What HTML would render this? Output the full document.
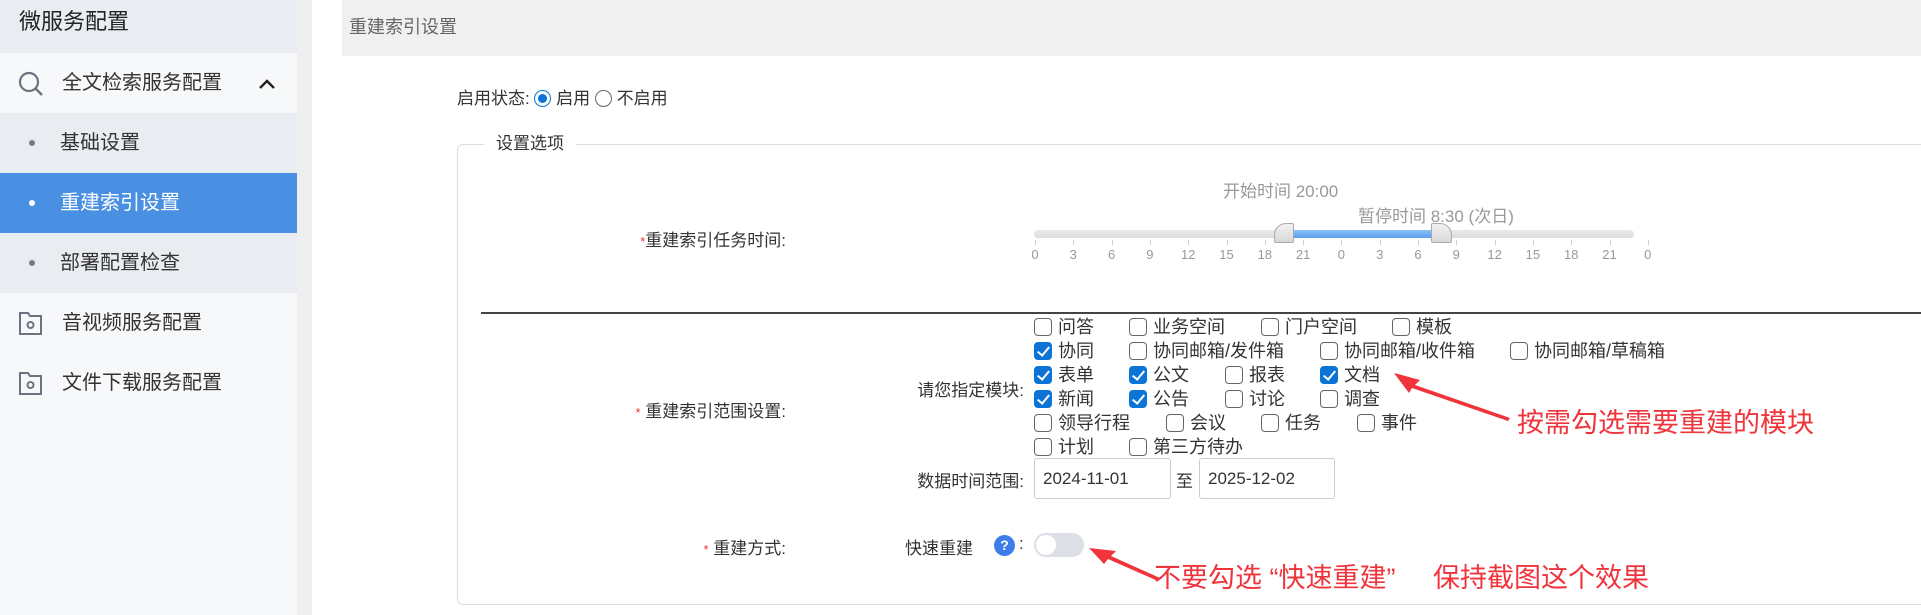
<!DOCTYPE html>
<html><head><meta charset="utf-8"><style>
*{margin:0;padding:0;box-sizing:border-box}
body{width:1921px;height:615px;overflow:hidden;background:#fff;font-family:"Liberation Sans","Noto Sans CJK SC",sans-serif;color:#333;position:relative}
.a{position:absolute;white-space:nowrap}
#side{position:absolute;left:0;top:0;width:297px;height:615px;background:#f7f8fa}
.si{position:absolute;left:0;width:297px;height:60px;font-size:20px;line-height:60px;color:#333}
.dot{position:absolute;left:29px;top:27px;width:6px;height:6px;border-radius:3px;background:#777b85}
.cb{position:absolute;width:18px;height:18px;border:1.5px solid #666;border-radius:4px;background:#fff}
.cb.on{background:#0b74d6;border-color:#0b74d6}
.cb.on:after{content:"";position:absolute;left:5px;top:1px;width:5px;height:10px;border:solid #fff;border-width:0 2.5px 2.5px 0;transform:rotate(40deg)}
.cl{position:absolute;font-size:18px;line-height:24px;color:#333}
.tk{position:absolute;top:247px;font-size:13px;color:#999;width:30px;margin-left:-15px;text-align:center}
.tm{position:absolute;top:240px;width:1px;height:5px;background:#ccc}
.lbl{position:absolute;font-size:17px;color:#333;text-align:right;white-space:nowrap}
.red{color:#f0343c}
</style></head><body>
<div id="side">
 <div class="si" style="top:0;height:53px;line-height:44px;background:#e9ecf1;font-size:22px;padding-left:19px;color:#222">微服务配置</div>
 <div class="si" style="top:53px;background:#f7f8fa">
  <svg class="a" style="left:18px;top:18px" width="26" height="26" viewBox="0 0 26 26"><circle cx="11" cy="11" r="9" fill="none" stroke="#6c7280" stroke-width="2.2"/><line x1="17.5" y1="17.5" x2="24" y2="24" stroke="#6c7280" stroke-width="2.4"/></svg>
  <span class="a" style="left:62px">全文检索服务配置</span>
  <svg class="a" style="left:258px;top:25px" width="18" height="12" viewBox="0 0 18 12"><polyline points="2,10 9,3 16,10" fill="none" stroke="#222" stroke-width="2.4"/></svg>
 </div>
 <div class="si" style="top:113px;background:#e9ecf1"><div class="dot"></div><span class="a" style="left:60px">基础设置</span></div>
 <div class="si" style="top:173px;background:#4a90e2;color:#fff"><div class="dot" style="background:#fff"></div><span class="a" style="left:60px">重建索引设置</span></div>
 <div class="si" style="top:233px;background:#e9ecf1"><div class="dot"></div><span class="a" style="left:60px">部署配置检查</span></div>
 <div class="si" style="top:293px">
  <svg class="a" style="left:18px;top:18px" width="25" height="25" viewBox="0 0 25 25"><path d="M2 2h8l2 3h11v18H2z" fill="none" stroke="#6c7280" stroke-width="2"/><circle cx="12.5" cy="14" r="3" fill="none" stroke="#6c7280" stroke-width="2"/></svg>
  <span class="a" style="left:62px">音视频服务配置</span></div>
 <div class="si" style="top:353px">
  <svg class="a" style="left:18px;top:18px" width="25" height="25" viewBox="0 0 25 25"><path d="M2 2h8l2 3h11v18H2z" fill="none" stroke="#6c7280" stroke-width="2"/><circle cx="12.5" cy="14" r="3" fill="none" stroke="#6c7280" stroke-width="2"/></svg>
  <span class="a" style="left:62px">文件下载服务配置</span></div>
</div>
<div class="a" style="left:297px;top:0;width:15px;height:615px;background:#efefef"></div>
<div class="a" style="left:342px;top:0;width:1579px;height:56px;background:#f0f0f0"></div>
<div class="a" style="left:349px;top:13px;font-size:18px;color:#666">重建索引设置</div>

<div class="a" style="left:457px;top:88px;font-size:17px;line-height:22px">启用状态: <span style="display:inline-block;width:17px;height:17px;border-radius:50%;border:1.5px solid #0b74d6;vertical-align:-3px;position:relative"><span style="position:absolute;left:2.5px;top:2.5px;width:9px;height:9px;border-radius:50%;background:#0b74d6"></span></span> 启用 <span style="display:inline-block;width:17px;height:17px;border-radius:50%;border:1.5px solid #666;vertical-align:-3px"></span> 不启用</div>

<div class="a" style="left:457px;top:144px;width:1600px;height:461px;border:1px solid #ddd;border-radius:6px"></div>
<div class="a" style="left:484px;top:133px;padding:0 12px;background:#fff;font-size:17px;line-height:22px">设置选项</div>

<div class="lbl" style="left:600px;width:186px;top:226px"><span class="red" style="font-size:13px">*</span>重建索引任务时间:</div>
<div class="a" style="left:1223px;top:177px;font-size:17px;color:#999">开始时间 20:00</div>
<div class="a" style="left:1358px;top:202px;font-size:17px;color:#999">暂停时间 8:30 (次日)</div>
<div class="a" style="left:1034px;top:230px;width:600px;height:8px;border-radius:4px;background:linear-gradient(#eaeaea,#dcdcdc)"></div>
<div class="a" style="left:1294px;top:230px;width:137px;height:8px;background:linear-gradient(#8ec0f5,#5a9ef0)"></div>
<div class="a" style="left:1274px;top:223px;width:20px;height:20px;background:linear-gradient(#f2f2f2,#d8d8d8);border:1px solid #aaa;border-radius:12px 2px 2px 2px"></div>
<div class="a" style="left:1431px;top:223px;width:21px;height:20px;background:linear-gradient(#f2f2f2,#d8d8d8);border:1px solid #aaa;border-radius:2px 12px 2px 2px"></div>
<div id="ticks"></div>

<div class="a" style="left:481px;top:312px;width:1440px;height:2px;background:#444"></div>

<div class="lbl" style="left:600px;width:186px;top:397px"><span class="red" style="font-size:13px">*</span> 重建索引范围设置:</div>
<div class="lbl" style="left:880px;width:144px;top:376px">请您指定模块:</div>
<div id="cbs"></div>
<div class="lbl" style="left:880px;width:144px;top:467px">数据时间范围:</div>
<div class="a" style="left:1034px;top:458px;width:137px;height:41px;border:1px solid #ccc;border-radius:3px;font-size:17px;line-height:39px;padding-left:8px">2024-11-01</div>
<div class="a" style="left:1176px;top:467px;font-size:17px">至</div>
<div class="a" style="left:1199px;top:458px;width:136px;height:41px;border:1px solid #ccc;border-radius:3px;font-size:17px;line-height:39px;padding-left:8px">2025-12-02</div>

<div class="lbl" style="left:600px;width:186px;top:534px"><span class="red" style="font-size:13px">*</span> 重建方式:</div>
<div class="a" style="left:905px;top:534px;font-size:17px">快速重建</div>
<div class="a" style="left:994px;top:535px;width:21px;height:21px;border-radius:50%;background:#3d7de8;color:#fff;font-size:14px;line-height:21px;text-align:center;font-weight:bold">?</div>
<div class="a" style="left:1019px;top:534px;font-size:17px">:</div>
<div class="a" style="left:1034px;top:533px;width:50px;height:24px;border-radius:12px;background:#dcdfe6"><div style="position:absolute;left:2px;top:2px;width:20px;height:20px;border-radius:50%;background:#fff"></div></div>

<svg class="a" style="left:0;top:0" width="1921" height="615">
<polygon points="1394,373 1420,380 1415,385 1510,418 1508,421 1412,388 1409,393" fill="#f0343c"/>
<polygon points="1089,548 1116,551 1111,556 1160,578 1158,581 1108,559 1104,564" fill="#f0343c"/>
</svg>
<div class="a red" style="left:1517px;top:406px;font-size:27px;line-height:34px">按需勾选需要重建的模块</div>
<div class="a red" style="left:1154px;top:561px;font-size:27px;line-height:34px">不要勾选 “快速重建”</div>
<div class="a red" style="left:1433px;top:561px;font-size:27px;line-height:34px">保持截图这个效果</div>

<script>
var t='',L=[0,3,6,9,12,15,18,21,0,3,6,9,12,15,18,21,0];
for(var i=0;i<17;i++){var x=1035+i*38.3;t+='<div class="tm" style="left:'+x+'px"></div><div class="tk" style="left:'+x+'px">'+L[i]+'</div>';}
document.getElementById('ticks').innerHTML=t;
var R=[[327,[[1034,'问答'],[1129,'业务空间'],[1261,'门户空间'],[1392,'模板']]],
[351,[[1034,'协同',1],[1129,'协同邮箱/发件箱'],[1320,'协同邮箱/收件箱'],[1510,'协同邮箱/草稿箱']]],
[375,[[1034,'表单',1],[1129,'公文',1],[1225,'报表'],[1320,'文档',1]]],
[399,[[1034,'新闻',1],[1129,'公告',1],[1225,'讨论'],[1320,'调查']]],
[423,[[1034,'领导行程'],[1166,'会议'],[1261,'任务'],[1357,'事件']]],
[447,[[1034,'计划'],[1129,'第三方待办']]]];
var h='';R.forEach(function(r){r[1].forEach(function(c){h+='<div class="cb'+(c[2]?' on':'')+'" style="left:'+c[0]+'px;top:'+(r[0]-9)+'px"></div><div class="cl" style="left:'+(c[0]+24)+'px;top:'+(r[0]-12)+'px">'+c[1]+'</div>';});});
document.getElementById('cbs').innerHTML=h;
</script>
</body></html>
